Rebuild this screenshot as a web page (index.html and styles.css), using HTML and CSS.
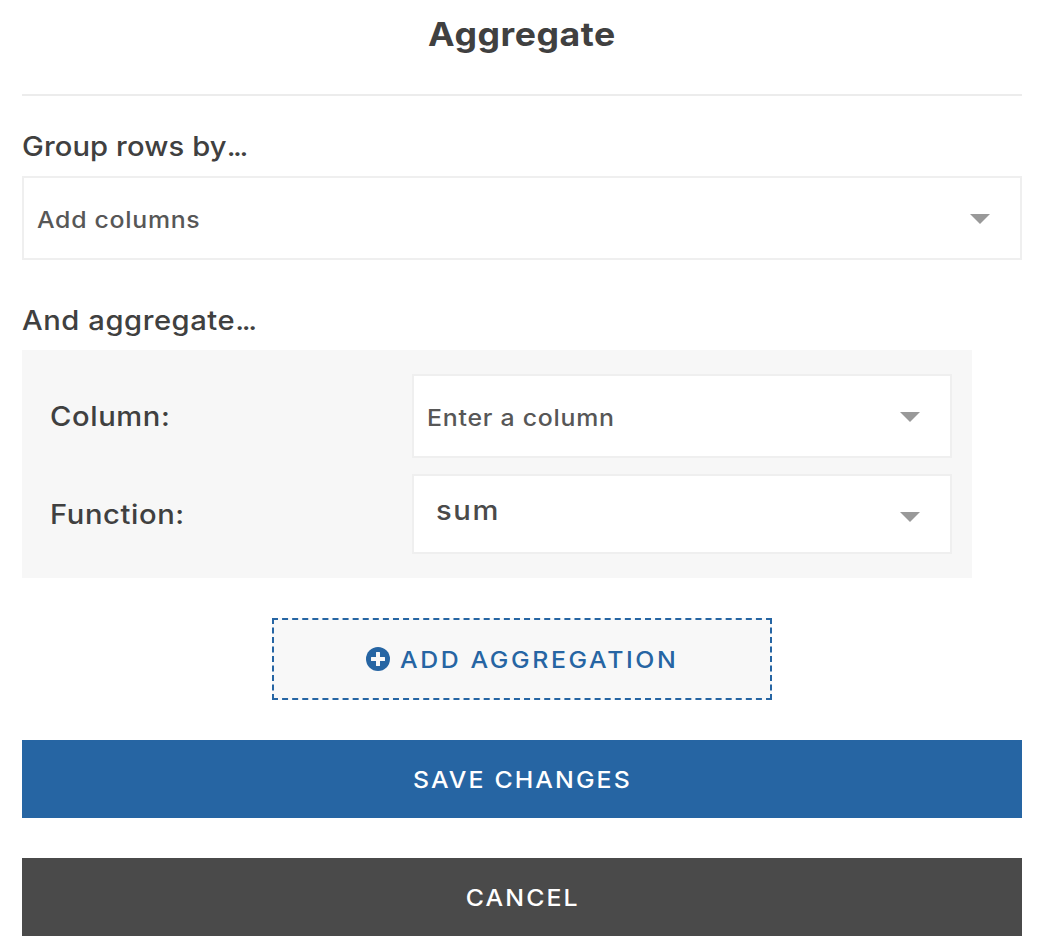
FILE: index.html
```
<!DOCTYPE html>
<html lang="en">
<head>
<meta charset="utf-8">
<title>Aggregate</title>
<link rel="stylesheet" href="styles.css">
</head>
<body>
<main class="panel">
  <h1 class="title"><span class="wide t-title">Aggregate</span></h1>
  <div class="label"><span class="wide left t-group">Group rows by<span class="dots">...</span></span></div>
  <div class="select select-wide"><span class="placeholder wide left t-add">Add columns</span><span class="arrow"></span></div>
  <div class="label label-second"><span class="wide left t-and">And aggregate<span class="dots">...</span></span></div>
  <section class="aggregation">
    <div class="row">
      <span class="name wide left">Column:</span>
      <div class="select"><span class="placeholder wide left t-enter">Enter a column</span><span class="arrow"></span></div>
    </div>
    <div class="row">
      <span class="name wide left">Function:</span>
      <div class="select select-value"><span class="value wide left">sum</span><span class="arrow"></span></div>
    </div>
  </section>
  <button class="add" type="button">
    <svg class="plus" viewBox="0 0 24 24"><circle cx="12" cy="12" r="12" fill="#2665a3"/><path d="M10.5 5h3q.5 0 .5.5V10h4.500q.5 0 .5.5v3q0 .5-.5.5H14v4.500q0 .5-.5.5h-3q-.5 0-.5-.5V14H5.500q-.5 0-.5-.5v-3q0-.5.5-.5H10V5.500q0-.5.5-.5z" fill="#f8f8f8"/></svg>
    <span class="wide left t-addagg">ADD AGGREGATION</span>
  </button>
  <button class="action save" type="button"><span class="wide t-save">SAVE CHANGES</span></button>
  <button class="action cancel" type="button"><span class="wide t-cancel">CANCEL</span></button>
</main>
</body>
</html>
```
FILE: styles.css
```
* { box-sizing: border-box; }
body {
  margin: 0;
  background: #fff;
  color: #404040;
  font: 500 27px/36px Inter, "Open Sans", sans-serif;
}
button { font: inherit; border: 0; border-radius: 0; padding: 0; }
.wide { display: inline-block; transform: scaleX(1.08); }
.left { transform-origin: 0 50%; }
.panel { width: 1000px; margin-left: 22px; display: flex; flex-direction: column; }
.title {
  height: 96px;
  margin: 0;
  padding-top: 14px;
  border-bottom: 2px solid #ececec;
  font-size: 33px;
  font-weight: 700;
  line-height: 40px;
  text-align: center;
}
.t-title { letter-spacing: 0.5px; margin-right: -0.5px; }
.label { margin-top: 32px; height: 48px; padding-top: 1px; white-space: nowrap; }
.label-second { margin-top: 42px; }
.t-group { letter-spacing: 0.1px; }
.t-and { letter-spacing: 0.52px; }
.dots { letter-spacing: -2.2px; }
.select {
  display: flex;
  align-items: center;
  justify-content: space-between;
  width: 540px;
  height: 84px;
  padding: 0 30px 0 13px;
  border: 2px solid #efefef;
  background: #fff;
}
.select-wide { width: 1000px; }
.placeholder { font-size: 23px; color: #575757; padding-top: 4px; }
.t-add { letter-spacing: 0.65px; }
.t-enter { letter-spacing: 0.7px; }
.arrow {
  width: 20px;
  height: 10px;
  margin-top: 2px;
  background: #999;
  clip-path: polygon(0 0, 100% 0, 50% 100%);
}
.aggregation {
  display: flex;
  flex-direction: column;
  gap: 16px;
  width: 950px;
  height: 228px;
  padding: 24px 20px 24px 28px;
  background: #f7f7f7;
}
.row { display: flex; justify-content: space-between; align-items: center; }
.name { margin-top: 2px; letter-spacing: 0.55px; }
.select-value { height: 80px; padding-left: 22px; }
.select-value .arrow { margin-top: 6px; }
.value { margin-top: -6px; color: #4a4a4a; letter-spacing: 1.5px; }
.add {
  display: flex;
  align-items: center;
  justify-content: center;
  gap: 10px;
  align-self: center;
  width: 500px;
  height: 82px;
  margin: 40px 0;
  padding-right: 22px;
  border: 2px dashed #2665a3;
  background: #f8f8f8;
  color: #2665a3;
  font-size: 23px;
}
.plus { width: 24px; height: 24px; }
.action { height: 78px; padding-top: 2px; color: #fff; font-size: 23px; }
.save { background: #2665a3; margin-bottom: 40px; }
.cancel { background: #4a4a4a; }
.t-addagg { letter-spacing: 2.42px; margin-right: -2.42px; padding-top: 2px; }
.t-save, .t-cancel { letter-spacing: 1.95px; margin-right: -1px; }
```
